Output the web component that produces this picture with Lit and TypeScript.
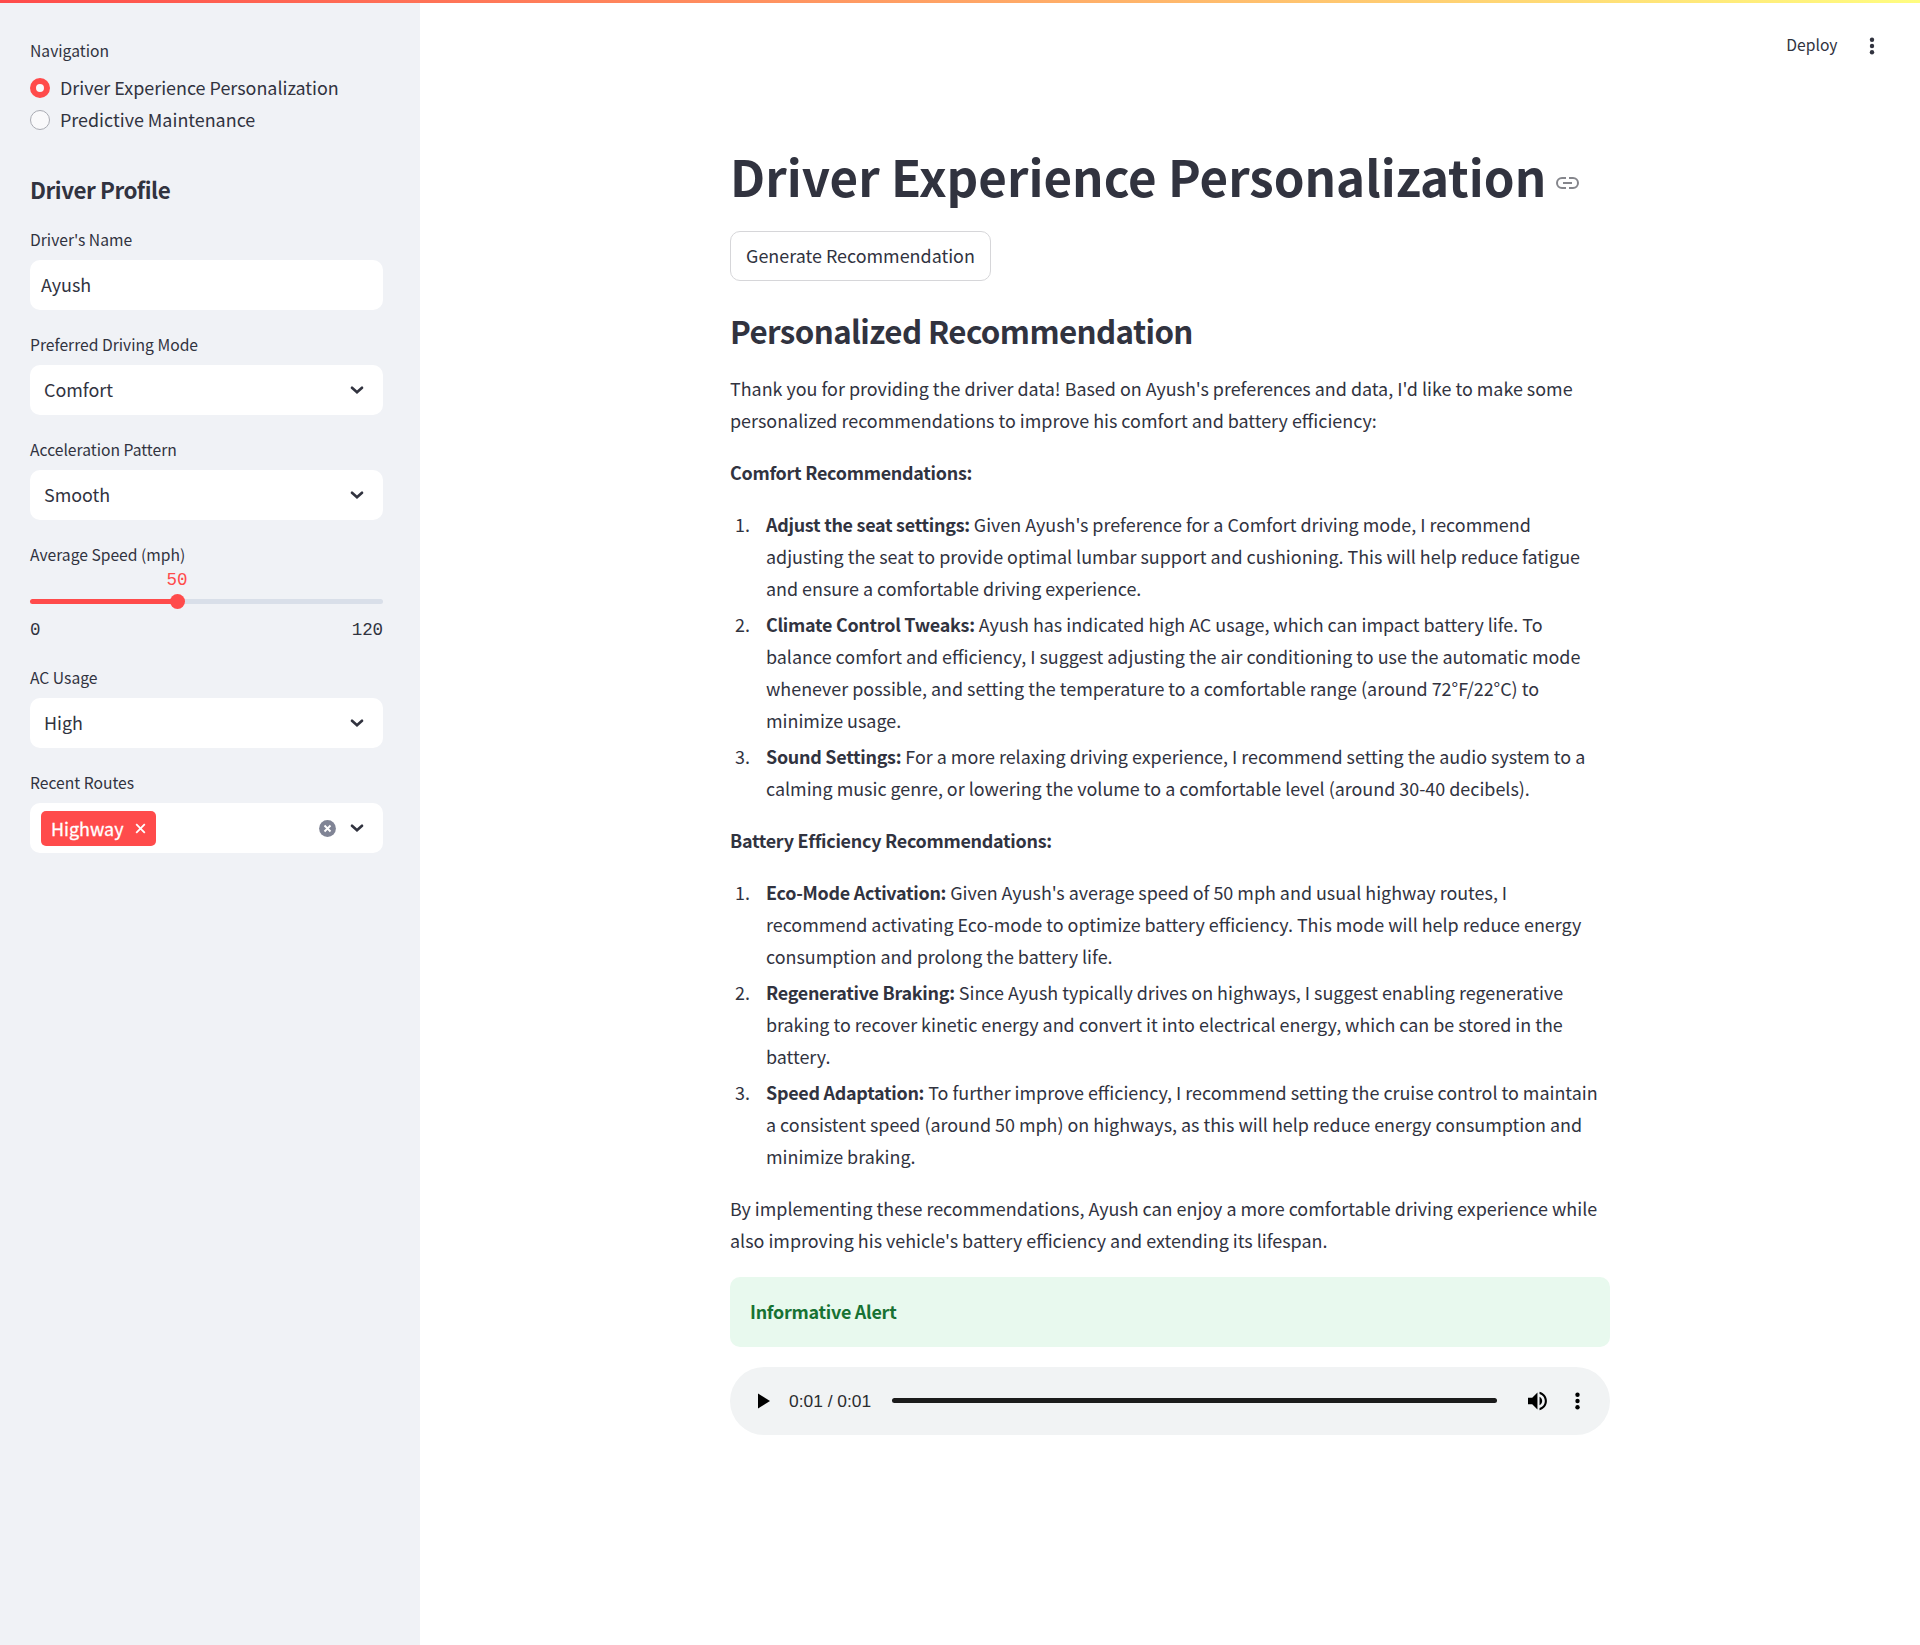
import { LitElement, html, css } from "lit";
import { customElement } from "lit/decorators.js";

const chevron = html`<svg class="chev" width="24" height="24" viewBox="0 0 24 24"><path fill="none" stroke="#31333f" stroke-width="2.7" stroke-linecap="round" d="M7 9.8L12 14.2L17 9.8"/></svg>`;

interface Item { title: string; lines: string[] }

const comfort: Item[] = [
  { title: "Adjust the seat settings:", lines: ["Given Ayush's preference for a Comfort driving mode, I recommend", "adjusting the seat to provide optimal lumbar support and cushioning. This will help reduce fatigue", "and ensure a comfortable driving experience."] },
  { title: "Climate Control Tweaks:", lines: ["Ayush has indicated high AC usage, which can impact battery life. To", "balance comfort and efficiency, I suggest adjusting the air conditioning to use the automatic mode", "whenever possible, and setting the temperature to a comfortable range (around 72°F/22°C) to", "minimize usage."] },
  { title: "Sound Settings:", lines: ["For a more relaxing driving experience, I recommend setting the audio system to a", "calming music genre, or lowering the volume to a comfortable level (around 30-40 decibels)."] },
];
const battery: Item[] = [
  { title: "Eco-Mode Activation:", lines: ["Given Ayush's average speed of 50 mph and usual highway routes, I", "recommend activating Eco-mode to optimize battery efficiency. This mode will help reduce energy", "consumption and prolong the battery life."] },
  { title: "Regenerative Braking:", lines: ["Since Ayush typically drives on highways, I suggest enabling regenerative", "braking to recover kinetic energy and convert it into electrical energy, which can be stored in the", "battery."] },
  { title: "Speed Adaptation:", lines: ["To further improve efficiency, I recommend setting the cruise control to maintain", "a consistent speed (around 50 mph) on highways, as this will help reduce energy consumption and", "minimize braking."] },
];

@customElement("app-root")
export class AppRoot extends LitElement {
  static styles = css`
    :host { display: block; font-family: "Noto Sans CJK SC", "Noto Sans", sans-serif; color: #31333f; font-size: 17.91px; line-height: 32px; }
    * { box-sizing: border-box; }
    .page { display: flex; height: 1645px; background: #fff; position: relative; overflow: hidden; }
    .bar { position: absolute; left: 0; top: 0; width: 100%; height: 3px; background: linear-gradient(90deg, #ff4b4b, #fffd80); }
    .side { width: 420px; flex: none; background: #f0f2f6; padding: 36px 37px 0 30px; display: flex; flex-direction: column; }
    .label { font-size: 15.67px; line-height: 30px; height: 30px; white-space: nowrap; }
    .radio { display: flex; align-items: center; gap: 10px; height: 32px; white-space: nowrap; }
    .radio span:last-child { padding-bottom: 2px; }
    .radios { margin-top: 6px; }
    .dot { width: 20px; height: 20px; border-radius: 50%; background: #f9f9fb; border: 1px solid #a9abb3; flex: none; }
    .dot.on { background: #f9f9fb; border: 6px solid #ff4b4b; }
    .h2 { font-size: 22.4px; font-weight: 600; letter-spacing: -0.46px; line-height: 30px; height: 30px; margin-top: 38px; margin-bottom: 21px; }
    .box { height: 50px; margin: 5px 0 20px; background: #fff; border-radius: 10px; display: flex; align-items: center; padding: 0 14px 0 11px; }
    .box.sel { padding-left: 14px; }
    .grow { flex: 1; padding-bottom: 2px; }
    .slider { height: 93px; display: flex; flex-direction: column; }
    .mono { font-family: "Liberation Mono", monospace; font-size: 17.5px; line-height: 20px; letter-spacing: -0.1px; }
    .val { color: #ff4b4b; width: 40px; text-align: center; margin-left: 127px; }
    .track { height: 15px; margin-top: 4px; display: flex; align-items: center; }
    .fill { height: 5px; background: #ff4b4b; border-radius: 3px 0 0 3px; }
    .thumb { width: 15px; height: 15px; margin: 0 -7.5px; border-radius: 50%; background: #ff4b4b; z-index: 1; }
    .rest { flex: 1; height: 5px; background: #d9dfe9; border-radius: 0 3px 3px 0; }
    .ends { display: flex; justify-content: space-between; margin-top: 11px; }
    .tag { height: 35px; width: 115px; background: #ff4b4b; color: #fff; border-radius: 5px; display: flex; align-items: center; padding-left: 10px; -webkit-text-stroke: 0.3px #fff; }
    .tag span { padding-bottom: 1px; }
    .tag svg { margin-left: 11px; }
    .clear { margin-right: 9.5px; }
    .main { flex: 1; padding: 0 0 0 310px; position: relative; }
    .top { position: absolute; right: 0; top: 30px; height: 31px; display: flex; align-items: center; font-size: 15.67px; padding-right: 45px; gap: 31.5px; }
    .top span { padding-bottom: 1px; }
    .col { width: 880px; padding-top: 143px; }
    .h1 { font-size: 49.28px; font-weight: 700; line-height: 66px; height: 66px; white-space: nowrap; display: flex; align-items: center; gap: 10px; }
    .h1 svg { margin-top: 13px; }
    .btn { width: 261px; height: 50px; border: 1px solid #d6d6d9; border-radius: 10px; margin-top: 22px; padding-bottom: 2px; display: flex; align-items: center; justify-content: center; white-space: nowrap; }
    .h3 { font-size: 31.3px; font-weight: 600; letter-spacing: -0.6px; line-height: 42px; height: 42px; margin-top: 29px; white-space: nowrap; }
    .p { margin-top: 20px; white-space: nowrap; }
    .line { display: block; height: 32px; white-space: nowrap; }
    b { font-weight: 600; letter-spacing: -0.26px; }
    .list { margin-top: 20px; display: flex; flex-direction: column; gap: 4px; }
    .item { display: grid; grid-template-columns: 36px 1fr; }
    .num { padding-left: 5px; }
    .alert { margin-top: 21px; height: 70px; border-radius: 10px; background: #e8f9ee; color: #177233; padding: 18px 20px; }
    .audio { margin-top: 20px; height: 67.5px; border-radius: 34px; background: #f1f3f4; display: flex; align-items: center; }
    .time { font-family: "Liberation Sans", Roboto, sans-serif; font-size: 17.4px; color: #2b2c2e; margin-left: 15px; width: 103px; white-space: nowrap; }
    .prog { width: 605px; height: 5px; border-radius: 3px; background: #1b1b1b; }
  `;

  private list(items: Item[]) {
    return html`<div class="list">${items.map((it, i) => html`<div class="item"><span class="num">${i + 1}.</span><div>${it.lines.map((l, j) => html`<span class="line">${j === 0 ? html`<b>${it.title}</b> ` : ""}${l}</span>`)}</div></div>`)}</div>`;
  }

  private select(label: string, value: string) {
    return html`<div class="label">${label}</div><div class="box sel"><span class="grow">${value}</span>${chevron}</div>`;
  }

  render() {
    return html`<div class="page">
      <div class="side">
        <div class="label">Navigation</div>
        <div class="radios">
          <div class="radio"><span class="dot on"></span><span>Driver Experience Personalization</span></div>
          <div class="radio"><span class="dot"></span><span>Predictive Maintenance</span></div>
        </div>
        <div class="h2">Driver Profile</div>
        <div class="label">Driver's Name</div>
        <div class="box"><span class="grow">Ayush</span></div>
        ${this.select("Preferred Driving Mode", "Comfort")}
        ${this.select("Acceleration Pattern", "Smooth")}
        <div class="label">Average Speed (mph)</div>
        <div class="slider">
          <div class="mono val">50</div>
          <div class="track"><span class="fill" style="width:${(50 / 120) * 100}%"></span><span class="thumb"></span><span class="rest"></span></div>
          <div class="ends mono"><span>0</span><span>120</span></div>
        </div>
        ${this.select("AC Usage", "High")}
        <div class="label">Recent Routes</div>
        <div class="box"><span class="tag"><span>Highway</span><svg width="11" height="11" viewBox="0 0 11 11"><path d="M1.2 1.2l8.6 8.6M9.8 1.2L1.2 9.8" stroke="#fff" stroke-width="1.8"/></svg></span><span class="grow"></span>
          <svg class="clear" width="17" height="17" viewBox="0 0 17 17"><circle cx="8.5" cy="8.5" r="8.4" fill="#808495"/><path d="M5.5 5.5l6 6M11.5 5.5l-6 6" stroke="#fff" stroke-width="1.9"/></svg>${chevron}</div>
      </div>
      <div class="main">
        <div class="top"><span>Deploy</span><svg width="6" height="18" viewBox="0 0 6 18"><circle cx="3" cy="2.8" r="2.2" fill="#31333f"/><circle cx="3" cy="9" r="2.2" fill="#31333f"/><circle cx="3" cy="15.2" r="2.2" fill="#31333f"/></svg></div>
        <div class="col">
          <div class="h1"><span>Driver Experience Personalization</span><svg width="23" height="12" viewBox="0 0 23 12" fill="none" stroke="#85868c" stroke-width="2"><path d="M10 1H6a5 5 0 0 0 0 10h4M13 1h4a5 5 0 0 1 0 10h-4M7 6h9"/></svg></div>
          <div class="btn">Generate Recommendation</div>
          <div class="h3">Personalized Recommendation</div>
          <div class="p"><span class="line">Thank you for providing the driver data! Based on Ayush's preferences and data, I'd like to make some</span><span class="line">personalized recommendations to improve his comfort and battery efficiency:</span></div>
          <div class="p"><b>Comfort Recommendations:</b></div>
          ${this.list(comfort)}
          <div class="p"><b>Battery Efficiency Recommendations:</b></div>
          ${this.list(battery)}
          <div class="p"><span class="line">By implementing these recommendations, Ayush can enjoy a more comfortable driving experience while</span><span class="line">also improving his vehicle's battery efficiency and extending its lifespan.</span></div>
          <div class="alert"><b>Informative Alert</b></div>
          <div class="audio"><svg width="44" height="30" viewBox="0 0 44 30"><path d="M28 7.5v15l12-7.5z"/></svg><span class="time">0:01 / 0:01</span><span class="prog"></span>
            <svg width="110" height="30" viewBox="0 0 110 30"><g transform="translate(27.85 2.4) scale(1.05)"><path d="M3 9v6h4l5 5V4L7 9H3zm13.500 3c0-1.770-1.020-3.290-2.500-4.030v8.050c1.480-.730 2.500-2.250 2.500-4.020zM14 3.230v2.060c2.890.860 5 3.540 5 6.710s-2.110 5.850-5 6.710v2.060c4.010-.910 7-4.490 7-8.770s-2.990-7.860-7-8.770z"/></g><circle cx="80.500" cy="8.700" r="2.200"/><circle cx="80.500" cy="15" r="2.200"/><circle cx="80.500" cy="21.300" r="2.200"/></svg></div>
        </div>
      </div>
      <div class="bar"></div>
    </div>`;
  }
}
